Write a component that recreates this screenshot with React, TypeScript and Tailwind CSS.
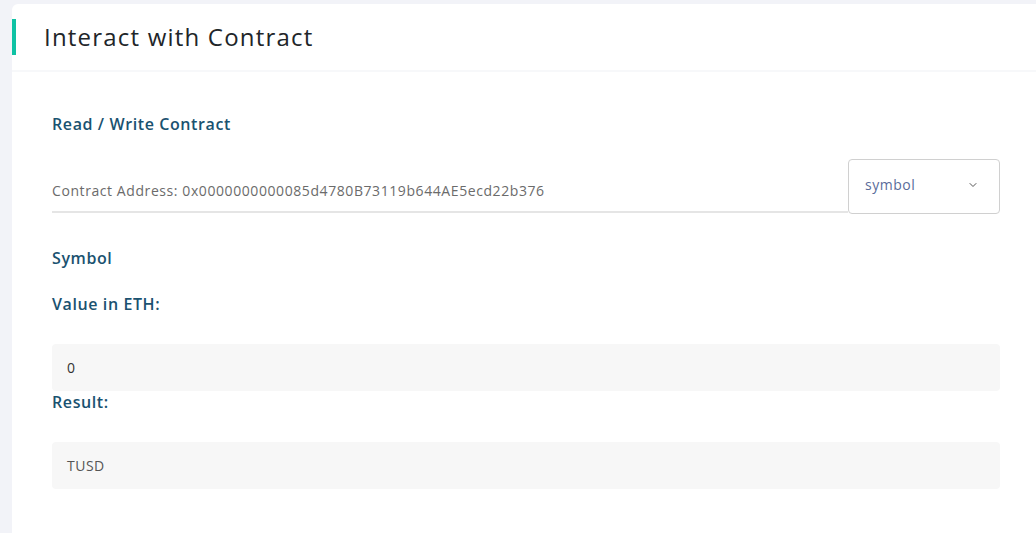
import { ChevronDown } from "lucide-react";

const App = () => {
  return (
    <div
      className="min-h-screen bg-[#f2f3f8] pt-1 pl-3"
      style={{ fontFamily: '"Open Sans", "Noto Sans", sans-serif' }}
    >
      <div className="bg-white rounded-tl-md min-h-[529px]">
        <div className="h-[68px] flex items-center border-b-2 border-[#f7f8fa]">
          <div className="w-1 h-9 bg-[#0fc2a4]" />
          <h1 className="ml-7 text-[24px] text-[#212529] tracking-[1.2px]">Interact with Contract</h1>
        </div>

        <div className="pl-10 pr-9 pt-10">
          <h2 className="text-[16px] font-semibold text-[#1a5270] leading-6 tracking-[0.6px]">
            Read / Write Contract
          </h2>

          <div className="flex items-end mt-[23px]">
            <div className="flex-1 border-b-2 border-[#e5e5e5] pb-[9px]">
              <span className="text-[14px] text-[#6b6b6b] tracking-[0.58px]">
                Contract Address: 0x0000000000085d4780B73119b644AE5ecd22b376
              </span>
            </div>
            <div className="w-[152px] h-[55px] border border-[#d0d0d0] rounded flex items-center justify-between pl-4 pr-5 pb-1 -mb-[1px]">
              <span className="text-[14px] text-[#5a6c9a] tracking-[0.5px]">symbol</span>
              <ChevronDown className="w-3 h-3 text-[#555]" strokeWidth={2} />
            </div>
          </div>

          <h3 className="mt-[33px] text-[16px] font-semibold text-[#1a5270] leading-6 tracking-[0.6px]">Symbol</h3>
          <h3 className="mt-[22px] text-[16px] font-semibold text-[#1a5270] leading-6 tracking-[0.6px]">
            Value in ETH:
          </h3>
          <div className="mt-[28px] h-[47px] bg-[#f7f7f7] rounded flex items-center px-[15px]">
            <span className="text-[14px] text-[#333]">0</span>
          </div>
          <h3 className="-mt-[1px] text-[16px] font-semibold text-[#1a5270] leading-6 tracking-[0.6px]">Result:</h3>
          <div className="mt-[28px] h-[47px] bg-[#f7f7f7] rounded flex items-center px-[15px]">
            <span className="text-[14px] text-[#555] tracking-[0.5px]">TUSD</span>
          </div>
        </div>
      </div>
    </div>
  );
};

export default App;
